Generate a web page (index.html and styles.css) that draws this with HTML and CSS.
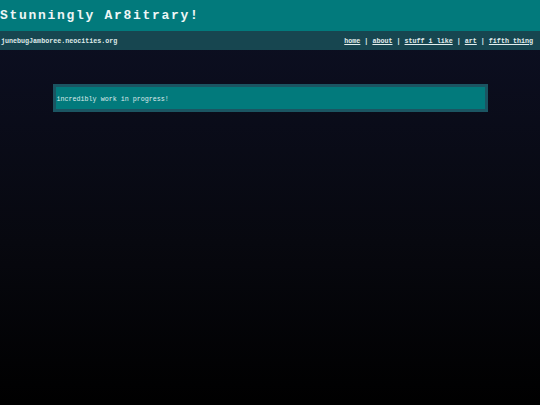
FILE: index.html
```html
<!DOCTYPE html>
<html lang="en">
<head>
    <meta charset="UTF-8">
    <meta name="viewport" content="width=device-width, initial-scale=1.0">
    <title>Stunningly Ar8itrary!</title>
    <link rel="stylesheet" href="styles.css">
</head>
<body>
    <div class="header">
        <h1>Stunningly Ar8itrary!</h1>
    </div>
    <div class="navbar">
        <span class="site">junebugJamboree.neocities.org</span>
        <span class="links">
            <a href="#">home</a> | <a href="#">about</a> | <a href="#">stuff i like</a> | <a href="#">art</a> | <a href="#">fifth thing</a>
        </span>
    </div>
    <div class="main">
        <div class="box">
            <p>incredibly work in progress!</p>
        </div>
    </div>
</body>
</html>
```

FILE: styles.css
```css
html {
    min-height: 100%;
    background: linear-gradient(to bottom, #0d1024 0%, #07080f 60%, #000000 100%);
}
body {
    margin: 0;
    font-family: "Liberation Mono", "DejaVu Sans Mono", monospace;
    color: #dfeaea;
    font-size: 6.7px;
}
.header {
    background-color: #027a7c;
    height: 31px;
    display: flex;
    align-items: center;
}
.header h1 {
    margin: 0;
    font-size: 13px;
    letter-spacing: 1.7px;
    color: #eef6f6;
    font-weight: bold;
}
.navbar {
    background-color: #174650;
    height: 19px;
    display: flex;
    align-items: center;
    justify-content: space-between;
    padding: 0 7px 0 1px;
    font-weight: bold;
}
.navbar a {
    color: #e2eeee;
}
.main {
    padding-top: 34px;
}
.box {
    width: 428px;
    margin: 0 auto;
    background-color: #027a7c;
    border: 3px solid #1b5562;
    height: 22px;
    display: flex;
    align-items: center;
    padding-left: 1px;
}
.box p {
    margin: 0;
    padding-top: 1px;
}
```
